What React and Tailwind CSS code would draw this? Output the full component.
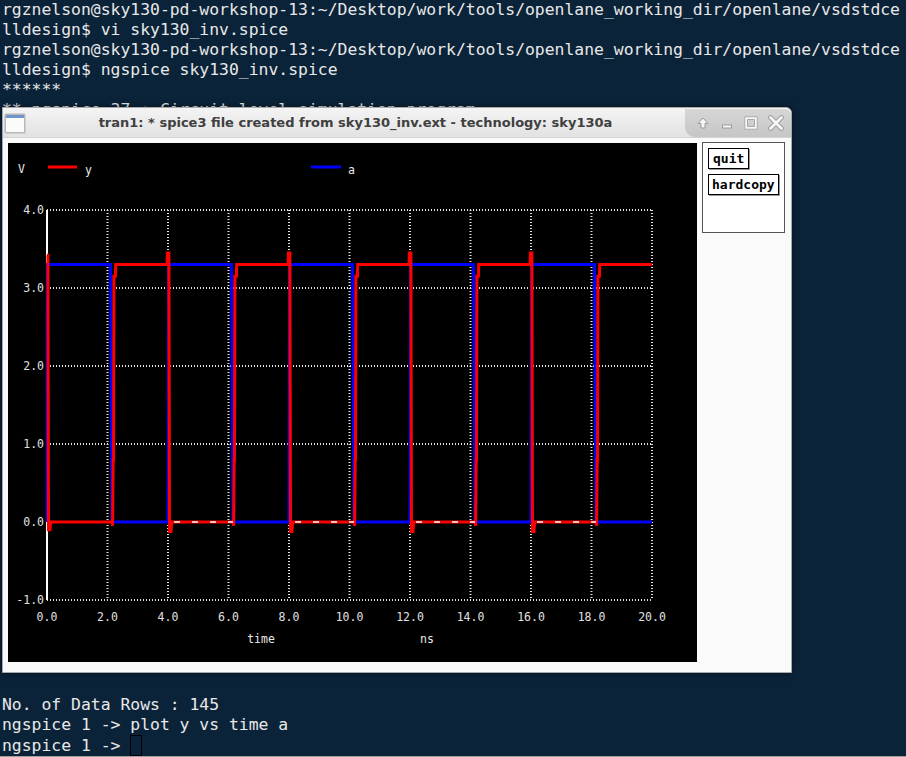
import React from 'react'

const X = (t) => 39 + t * 30.25
const Y = (v) => 379 - v * 78

const toPath = (pts) =>
  pts.map(([t, v], i) => `${i ? 'L' : 'M'}${X(t).toFixed(1)} ${Y(v).toFixed(1)}`).join(' ')

const falls = [2.1, 6.1, 10.1, 14.1, 18.1]
const rises = [4, 8, 12, 16]

const redPts = (() => {
  const p = [[0, 3.42], [0.03, 3.42], [0.05, -0.1], [0.1, -0.1], [0.12, 0]]
  falls.forEach((F, i) => {
    p.push([F + 0.06, 0], [F + 0.07, -0.05], [F + 0.09, 0.8], [F + 0.1, 0.8], [F + 0.11, 3.15], [F + 0.16, 3.15], [F + 0.17, 3.3])
    const T = rises[i]
    if (T) {
      p.push([T - 0.03, 3.3], [T - 0.02, 3.45], [T + 0.03, 3.45], [T + 0.05, -0.12], [T + 0.1, -0.12], [T + 0.12, 0])
    }
  })
  p.push([20, 3.3])
  return p
})()

const bluePts = (() => {
  const p = [[0, 0], [0.01, 3.3]]
  falls.forEach((F, i) => {
    p.push([F, 3.3], [F + 0.05, 0])
    const T = rises[i]
    if (T) p.push([T, 0], [T + 0.02, 3.3])
  })
  p.push([20, 0])
  return p
})()

const xTicks = [0, 2, 4, 6, 8, 10, 12, 14, 16, 18, 20]
const yTicks = [4, 3, 2, 1, 0, -1]

const Plot = () => (
  <svg width="689" height="519" className="block bg-black" style={{ fontFamily: '"DejaVu Sans Mono", monospace' }}>
    {/* legend */}
    <text x="10" y="30" fontSize="11.5" fill="#e8e8e8">V</text>
    <line x1="40" y1="24" x2="69" y2="24" stroke="#ff0000" strokeWidth="3" />
    <text x="77" y="31" fontSize="11.5" fill="#e8e8e8">y</text>
    <line x1="303" y1="24" x2="333" y2="24" stroke="#0000ff" strokeWidth="3" />
    <text x="340" y="31" fontSize="11.5" fill="#e8e8e8">a</text>

    {/* grid */}
    {xTicks.slice(1).map((t) => (
      <line key={'gx' + t} x1={X(t)} y1={Y(4)} x2={X(t)} y2={Y(-1)} stroke="#e4e4e4" strokeWidth="2" strokeDasharray="1 2" />
    ))}
    {yTicks.map((v) => (
      <line key={'gy' + v} x1={X(0)} y1={Y(v)} x2={X(20)} y2={Y(v)} stroke="#e4e4e4" strokeWidth="2" strokeDasharray="1 2" />
    ))}
    <line x1={X(0)} y1={Y(4)} x2={X(0)} y2={Y(-1)} stroke="#ffffff" strokeWidth="2" />

    {/* labels */}
    {yTicks.map((v) => (
      <text key={'ly' + v} x="36" y={Y(v) + 4} fontSize="11.5" fill="#e0e0e0" textAnchor="end">
        {v.toFixed(1)}
      </text>
    ))}
    {xTicks.map((t) => (
      <text key={'lx' + t} x={X(t)} y="478" fontSize="11.5" fill="#e0e0e0" textAnchor="middle">
        {t.toFixed(1)}
      </text>
    ))}
    <text x="253" y="500" fontSize="11.5" fill="#e8e8e8" textAnchor="middle">time</text>
    <text x="419" y="500" fontSize="11.5" fill="#e8e8e8" textAnchor="middle">ns</text>

    {/* traces */}
    <path d={toPath(bluePts)} fill="none" stroke="#0000ff" strokeWidth="3" />
    <path d={toPath(redPts)} fill="none" stroke="#ff0000" strokeWidth="3" />
    {[4.2, 8.2, 12.2, 16.2].map((t) => (
      <line key={'wd' + t} x1={X(t)} y1={Y(0)} x2={X(t + 1.95)} y2={Y(0)} stroke="#ffffff" strokeWidth="1.5" strokeDasharray="6 12" />
    ))}
  </svg>
)

const WinIcon = () => (
  <svg width="22" height="21" viewBox="0 0 22 21">
    <rect x="0.5" y="0.5" width="21" height="20" rx="1.5" fill="#b8b8b8" />
    <rect x="2" y="2" width="18" height="17" fill="#fbfbfb" />
    <rect x="2" y="2" width="18" height="3" fill="#6f95cc" />
  </svg>
)

const TitleButtons = () => (
  <div className="flex items-center gap-[10px] pl-[11px] h-full">
    <svg width="14" height="14" viewBox="0 0 14 14">
      <path d="M7 2 L12 7.5 L9 7.5 L9 12 L5 12 L5 7.5 L2 7.5 Z" fill="#f7f7f7" stroke="#9a9a9a" strokeWidth="1" />
    </svg>
    <svg width="14" height="14" viewBox="0 0 14 14">
      <rect x="2.5" y="9" width="9" height="3" fill="#f7f7f7" stroke="#9a9a9a" strokeWidth="1" />
    </svg>
    <svg width="14" height="14" viewBox="0 0 14 14">
      <rect x="2" y="2" width="10" height="10" fill="none" stroke="#f7f7f7" strokeWidth="3" />
      <rect x="0.8" y="0.8" width="12.4" height="12.4" fill="none" stroke="#9a9a9a" strokeWidth="0.8" />
      <rect x="3.6" y="3.6" width="6.8" height="6.8" fill="none" stroke="#9a9a9a" strokeWidth="0.8" />
    </svg>
    <svg width="16" height="16" viewBox="0 0 16 16">
      <path d="M2.5 2.5 L13.5 13.5 M13.5 2.5 L2.5 13.5" stroke="#9a9a9a" strokeWidth="4.6" strokeLinecap="round" />
      <path d="M2.5 2.5 L13.5 13.5 M13.5 2.5 L2.5 13.5" stroke="#f7f7f7" strokeWidth="2.8" strokeLinecap="round" />
    </svg>
  </div>
)

const PlotWindow = () => (
  <div className="absolute left-[2px] top-[107px] w-[790px] h-[566px] flex flex-col rounded-tr-[6px] border border-[#a8a8a8] bg-white shadow-[0_0_6px_rgba(0,0,0,0.5)]">
    <div className="h-[30px] flex items-stretch bg-gradient-to-b from-[#f4f4f4] to-[#e2e2e2] border-b border-[#d4d4d4] rounded-tr-[6px]">
      <div className="pl-[1px] pt-[5px]">
        <WinIcon />
      </div>
      <div
        className="flex-1 flex items-center justify-center text-[13px] font-bold text-[#404040]"
        style={{ fontFamily: '"DejaVu Sans", sans-serif' }}
      >
        tran1: * spice3 file created from sky130_inv.ext - technology: sky130a
      </div>
      <div className="w-[106px] mt-[1px] bg-gradient-to-b from-[#d6d6d6] to-[#c6c6c6] rounded-bl-[10px] rounded-tr-[6px]">
        <TitleButtons />
      </div>
    </div>
    <div className="flex-1 flex items-start gap-[5px] pt-[5px] pl-[5px] bg-[#fafafa]">
      <Plot />
      <div className="w-[83px] h-[91px] border border-[#555] bg-white flex flex-col items-start gap-[5px] p-[5px] -mt-[1px]">
        <div className="border border-black px-[4px] h-[21px] flex items-center text-[13px] font-bold text-black shadow-[1px_1px_0_#999]" style={{ fontFamily: '"DejaVu Sans Mono", monospace' }}>
          quit
        </div>
        <div className="border border-black px-[3px] h-[21px] flex items-center text-[13px] font-bold text-black shadow-[1px_1px_0_#999]" style={{ fontFamily: '"DejaVu Sans Mono", monospace' }}>
          hardcopy
        </div>
      </div>
    </div>
  </div>
)

export default function App() {
  const top = [
    'rgznelson@sky130-pd-workshop-13:~/Desktop/work/tools/openlane_working_dir/openlane/vsdstdce',
    'lldesign$ vi sky130_inv.spice',
    'rgznelson@sky130-pd-workshop-13:~/Desktop/work/tools/openlane_working_dir/openlane/vsdstdce',
    'lldesign$ ngspice sky130_inv.spice',
    '******',
    '** ngspice-37 : Circuit level simulation program',
  ]
  return (
    <div
      className="relative w-[906px] h-[757px] overflow-hidden bg-[#0b2339] text-[#e8e8e8] text-[16.4px] leading-[20px] flex flex-col justify-between border-b border-[#a0a0a0]"
      style={{ fontFamily: '"DejaVu Sans Mono", monospace' }}
    >
      <div className="pl-[2px] whitespace-pre">
        {top.map((l, i) => (
          <div key={i}>{l}</div>
        ))}
      </div>
      <div className="pl-[2px] whitespace-pre">
        <div>No. of Data Rows : 145</div>
        <div>ngspice 1 -&gt; plot y vs time a</div>
        <div className="flex items-center">
          <span>ngspice 1 -&gt; </span>
          <span className="inline-block w-[12px] h-[21px] border border-black" />
        </div>
      </div>
      <PlotWindow />
    </div>
  )
}
